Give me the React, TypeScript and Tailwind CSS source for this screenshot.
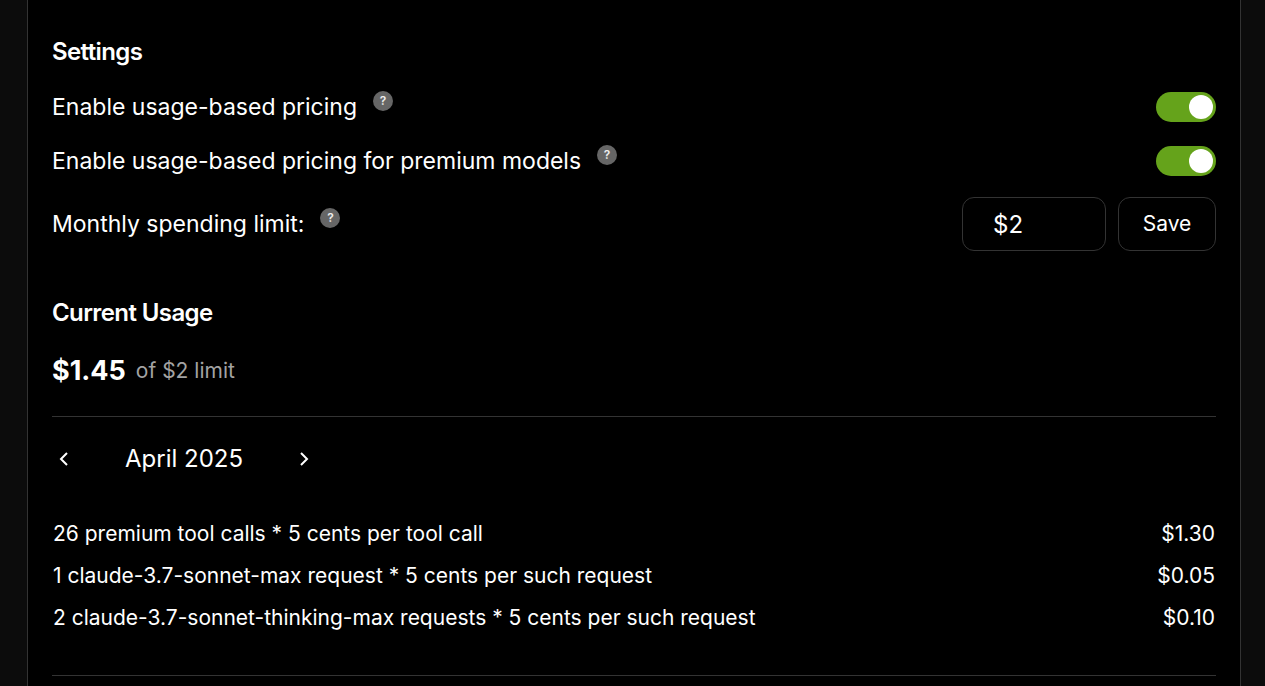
import { useState, type ReactNode } from "react";

function Help({ text }: { text: string }) {
  return (
    <button
      type="button"
      title={text}
      aria-label={text}
      className="mb-3 ml-4 flex size-5 items-center justify-center rounded-full bg-[#666] text-xs font-semibold text-[#eee]"
    >
      ?
    </button>
  );
}

function Toggle({ id }: { id: string }) {
  const [on, setOn] = useState(true);
  return (
    <span className="relative flex h-[30px] w-15">
      <input
        id={id}
        type="checkbox"
        role="switch"
        checked={on}
        onChange={() => setOn(!on)}
        className="peer h-full w-full cursor-pointer appearance-none rounded-full bg-[#444] checked:bg-[#65a31b]"
      />
      <span className="pointer-events-none absolute top-[3px] left-[3px] size-6 rounded-full bg-white peer-checked:left-[33px]" />
    </span>
  );
}

function Row({ id, label, help, children }: { id: string; label: string; help: string; children: ReactNode }) {
  return (
    <div className="flex items-center justify-between">
      <div className="flex items-center">
        <label htmlFor={id} className="text-[23px] leading-8">{label}</label>
        <Help text={help} />
      </div>
      {children}
    </div>
  );
}

function Chevron({ d, label }: { d: string; label: string }) {
  return (
    <button type="button" aria-label={label} className="flex size-6 items-center justify-center">
      <svg viewBox="0 0 24 24" className="size-6" fill="none" stroke="currentColor" strokeWidth="2">
        <path d={d} />
      </svg>
    </button>
  );
}

const charges = [
  ["26 premium tool calls * 5 cents per tool call", "$1.30"],
  ["1 claude-3.7-sonnet-max request * 5 cents per such request", "$0.05"],
  ["2 claude-3.7-sonnet-thinking-max requests * 5 cents per such request", "$0.10"],
];

export default function App() {
  return (
    <div className="min-h-screen bg-[#0c0c0c] pr-6 pl-[27px] font-['Inter',sans-serif] text-white">
      <main className="min-h-screen border-x border-[#333] bg-black px-6 pt-9">
        <h2 className="text-2xl leading-8 font-semibold tracking-tight">Settings</h2>
        <div className="mt-[23px] flex flex-col gap-[22px]">
          <Row id="usage" label="Enable usage-based pricing" help="About usage-based pricing">
            <Toggle id="usage" />
          </Row>
          <Row id="premium" label="Enable usage-based pricing for premium models" help="About premium models">
            <Toggle id="premium" />
          </Row>
        </div>
        <div className="mt-5">
          <Row id="limit" label="Monthly spending limit:" help="About the spending limit">
            <form className="flex gap-3" onSubmit={(e) => e.preventDefault()}>
              <input id="limit" type="text" defaultValue="$2" className="h-[54px] w-36 rounded-xl border border-[#333] bg-black px-[30px] text-2xl" />
              <button type="submit" className="h-[54px] w-[98px] rounded-xl border border-[#333] text-[21px]">Save</button>
            </form>
          </Row>
        </div>
        <h2 className="mt-[46px] text-2xl leading-8 font-semibold tracking-tight">Current Usage</h2>
        <p className="mt-6 flex items-center gap-2.5 leading-9">
          <strong className="text-[27px] leading-9 font-bold">$1.45</strong>
          <span className="text-[21px] leading-9 text-[#a3a3a3]">of $2 limit</span>
        </p>
        <section className="mt-[27px] border-y border-[#333] pt-[26px] pb-9">
          <div className="flex w-[264px] items-center justify-between">
            <Chevron d="m15 6-6 6 6 6" label="Previous month" />
            <h3 className="text-2xl leading-8">April 2025</h3>
            <Chevron d="m9 6 6 6-6 6" label="Next month" />
          </div>
          <table className="mt-[38px] w-full text-[21px]">
            <tbody>
              {charges.map(([item, price]) => (
                <tr key={item} className="h-[42px]">
                  <td className="px-px">{item}</td>
                  <td className="px-px text-right">{price}</td>
                </tr>
              ))}
            </tbody>
          </table>
        </section>
      </main>
    </div>
  );
}
